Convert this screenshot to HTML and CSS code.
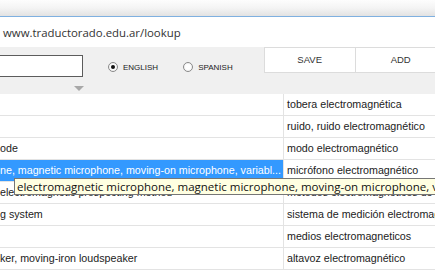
FILE: index.html
```html
<!DOCTYPE html>
<html lang="en">
<head>
    <meta charset="UTF-8">
    <title>Lookup</title>
    <link rel="stylesheet" href="styles.css">
</head>
<body>
    <div class="chrome"></div>
    <div class="address">www.traductorado.edu.ar/lookup</div>

    <div class="toolbar">
        <div class="search">
            <div class="search-box"></div>
            <div class="search-arrow"></div>
        </div>
        <div class="lang">
            <span class="radio checked"></span>
            <span class="radio-label">ENGLISH</span>
            <span class="radio spanish"></span>
            <span class="radio-label">SPANISH</span>
        </div>
        <div class="actions">
            <div class="btn">SAVE</div>
            <div class="btn add">ADD</div>
        </div>
    </div>

    <div class="grid">
        <div class="row"><div class="cell en"></div><div class="cell es">tobera electromagnética</div></div>
        <div class="row"><div class="cell en"></div><div class="cell es">ruido, ruido electromagnético</div></div>
        <div class="row"><div class="cell en">ode</div><div class="cell es">modo electromagnético</div></div>
        <div class="row selected"><div class="cell en">ne, magnetic microphone, moving-on microphone, variabl...</div><div class="cell es">micrófono electromagnético</div></div>
        <div class="row"><div class="cell en">electromagnetic prospecting method</div><div class="cell es">métodos electromagnéticos de prospección</div></div>
        <div class="row"><div class="cell en">g system</div><div class="cell es">sistema de medición electromagnético</div></div>
        <div class="row"><div class="cell en"></div><div class="cell es">medios electromagneticos</div></div>
        <div class="row"><div class="cell en">ker, moving-iron loudspeaker</div><div class="cell es">altavoz electromagnético</div></div>
    </div>

    <!-- подсказка над выделенной строкой -->
    <div class="tooltip">electromagnetic microphone, magnetic microphone, moving-on microphone, variable reluctance microphone</div>
</body>
</html>
```

FILE: styles.css
```css
body {
    margin: 0;
    width: 435px;
    height: 270px;
    overflow: hidden;
    position: relative;
    background-color: white;
    font-family: "Liberation Sans", Arial, sans-serif;
}
.chrome {
    height: 16px;
    background: linear-gradient(#fdfdfd, #f4f4f4 50%, #e2e2e2);
    border-bottom: 1px solid #7fb0e0;
}
.address {
    height: 30px;
    line-height: 31px;
    padding-left: 3px;
    font-family: "Open Sans", sans-serif;
    font-size: 11.4px;
    color: #333;
    white-space: nowrap;
}
.toolbar {
    height: 47px;
    background-color: #f0f0f0;
    display: flex;
    align-items: flex-start;
    overflow: hidden;
}
.search {
    flex-shrink: 0;
    margin-left: -2px;
    margin-top: 8px;
    width: 85px;
    display: flex;
    flex-direction: column;
}
.search-box {
    height: 20px;
    background-color: white;
    border: 1px solid #5c5c5c;
}
.search-arrow {
    align-self: flex-end;
    margin-top: 9px;
    margin-right: -1px;
    width: 0;
    height: 0;
    border-left: 5px solid transparent;
    border-right: 5px solid transparent;
    border-top: 5px solid #a8a8a8;
}
.lang {
    flex-shrink: 0;
    display: flex;
    align-items: center;
    margin-left: 25px;
    margin-top: 15px;
}
.radio {
    width: 8px;
    height: 8px;
    border: 1px solid #8a8a8a;
    border-radius: 50%;
    background: radial-gradient(#ffffff 40%, #e6e6e6);
    position: relative;
}
.radio.checked::after {
    content: "";
    position: absolute;
    left: 2px;
    top: 2px;
    width: 4px;
    height: 4px;
    border-radius: 50%;
    background-color: #111;
}
.radio.spanish {
    margin-left: 25px;
}
.radio-label {
    margin-left: 5px;
    font-size: 8px;
    color: #222;
}
.actions {
    flex-shrink: 0;
    display: flex;
    margin-left: 31px;
}
.btn {
    width: 90px;
    height: 24px;
    line-height: 24px;
    text-align: center;
    background-color: white;
    border: 1px solid #dcdcdc;
    font-size: 9.5px;
    color: #333;
}
.btn.add {
    margin-left: -1px;
}
.grid {
    font-size: 10.7px;
    color: #222;
}
.row {
    display: flex;
    height: 21px;
    border-bottom: 1px solid #e3e3e3;
}
.cell {
    line-height: 21px;
    white-space: nowrap;
    overflow: hidden;
}
.cell.en {
    width: 283px;
    flex-shrink: 0;
    border-right: 1px solid #e3e3e3;
}
.cell.es {
    flex: 1;
    padding-left: 3px;
}
.row.selected .cell.en {
    background-color: #3399ff;
    color: white;
}
.tooltip {
    position: absolute;
    left: 14px;
    top: 178px;
    height: 15px;
    line-height: 15px;
    padding: 0 2px;
    background-color: #ffffe1;
    border: 1px solid #767676;
    font-family: "Open Sans", sans-serif;
    font-size: 11.5px;
    color: #111;
    white-space: nowrap;
}
```
